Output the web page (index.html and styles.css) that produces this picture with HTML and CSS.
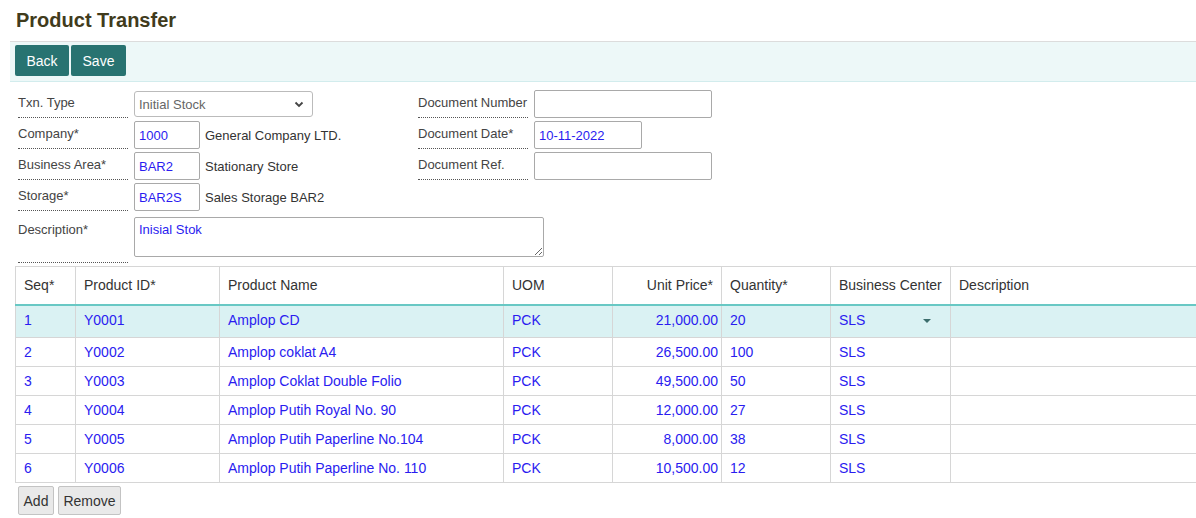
FILE: index.html
```html
<!DOCTYPE html>
<html>
<head>
<meta charset="utf-8">
<title>Product Transfer</title>
<link rel="stylesheet" href="styles.css">
</head>
<body>
<h1 class="title">Product Transfer</h1>
<div class="toolbar">
  <button class="btn-primary btn-back">Back</button>
  <button class="btn-primary btn-save">Save</button>
</div>
<div class="form">
  <div class="cols">
    <div class="col">
      <div class="row">
        <div class="label">Txn. Type</div>
        <div class="ctrl">
          <span class="select-wrap">
            <select class="select"><option>Initial Stock</option></select>
            <svg class="chev" width="10" height="7" viewBox="0 0 10 7"><path d="M1.5 1.5 L5 5 L8.5 1.5" fill="none" stroke="#444" stroke-width="1.8"/></svg>
          </span>
        </div>
      </div>
      <div class="row">
        <div class="label">Company*</div>
        <div class="ctrl"><input class="input w-short" value="1000"><span class="desc">General Company LTD.</span></div>
      </div>
      <div class="row">
        <div class="label">Business Area*</div>
        <div class="ctrl"><input class="input w-short" value="BAR2"><span class="desc">Stationary Store</span></div>
      </div>
      <div class="row">
        <div class="label">Storage*</div>
        <div class="ctrl"><input class="input w-short" value="BAR2S"><span class="desc">Sales Storage BAR2</span></div>
      </div>
    </div>
    <div class="col">
      <div class="row">
        <div class="label">Document Number</div>
        <div class="ctrl"><input class="input w-long" value=""></div>
      </div>
      <div class="row">
        <div class="label">Document Date*</div>
        <div class="ctrl"><input class="input w-date" value="10-11-2022"></div>
      </div>
      <div class="row">
        <div class="label">Document Ref.</div>
        <div class="ctrl"><input class="input w-long" value=""></div>
      </div>
    </div>
  </div>
  <div class="row row-desc">
    <div class="label label-desc">Description*</div>
    <div class="ctrl ctrl-top"><textarea class="textarea">Inisial Stok</textarea></div>
  </div>
</div>
<div class="grid-wrap">
  <table class="grid">
    <colgroup>
      <col class="c-seq"><col class="c-pid"><col class="c-name"><col class="c-uom"><col class="c-price"><col class="c-qty"><col class="c-bc"><col class="c-desc">
    </colgroup>
    <thead>
      <tr><th>Seq*</th><th>Product ID*</th><th>Product Name</th><th>UOM</th><th class="num">Unit Price*</th><th>Quantity*</th><th>Business Center</th><th>Description</th></tr>
    </thead>
    <tbody>
      <tr class="sel"><td>1</td><td>Y0001</td><td>Amplop CD</td><td>PCK</td><td class="num">21,000.00</td><td>20</td><td><span class="bc">SLS<span class="caret"></span></span></td><td></td></tr>
      <tr><td>2</td><td>Y0002</td><td>Amplop coklat A4</td><td>PCK</td><td class="num">26,500.00</td><td>100</td><td>SLS</td><td></td></tr>
      <tr><td>3</td><td>Y0003</td><td>Amplop Coklat Double Folio</td><td>PCK</td><td class="num">49,500.00</td><td>50</td><td>SLS</td><td></td></tr>
      <tr><td>4</td><td>Y0004</td><td>Amplop Putih Royal No. 90</td><td>PCK</td><td class="num">12,000.00</td><td>27</td><td>SLS</td><td></td></tr>
      <tr><td>5</td><td>Y0005</td><td>Amplop Putih Paperline No.104</td><td>PCK</td><td class="num">8,000.00</td><td>38</td><td>SLS</td><td></td></tr>
      <tr><td>6</td><td>Y0006</td><td>Amplop Putih Paperline No. 110</td><td>PCK</td><td class="num">10,500.00</td><td>12</td><td>SLS</td><td></td></tr>
    </tbody>
  </table>
</div>
<div class="grid-actions">
  <button class="btn btn-add">Add</button>
  <button class="btn btn-remove">Remove</button>
</div>
</body>
</html>
```
FILE: styles.css
```css
html, body {
  margin: 0;
  padding: 0;
  overflow: hidden;
  background: #fff;
}
body {
  font-family: "Liberation Sans", Arial, sans-serif;
  font-size: 14px;
  color: #333;
}
.title {
  margin: 0;
  padding: 9px 0 0 16px;
  font-size: 20px;
  line-height: 23px;
  font-weight: bold;
  color: #413b1c;
}
.toolbar {
  margin: 9px 0 0 10px;
  border-top: 1px solid #dcdcdc;
  border-bottom: 1px solid #d2eced;
  background: #edf8f8;
  padding: 3px 0 5px 5px;
  display: flex;
  gap: 2px;
}
.btn-primary {
  height: 31px;
  padding: 0;
  border: none;
  border-radius: 2px;
  background: #287371;
  color: #fff;
  font-family: inherit;
  font-size: 14px;
  text-align: center;
}
.btn-back { width: 54px; }
.btn-save { width: 55px; }
.form {
  padding: 8px 0 0 18px;
}
.cols {
  display: flex;
}
.col {
  display: flex;
  flex-direction: column;
  gap: 3px;
}
.col:first-child { width: 400px; }
.row {
  display: flex;
  height: 28px;
}
.label {
  width: 110px;
  box-sizing: border-box;
  padding-top: 5px;
  border-bottom: 1px dotted #555;
  font-size: 13px;
  line-height: 15px;
  color: #444;
}
.ctrl {
  display: flex;
  align-items: center;
  margin-left: 6px;
}
.ctrl-top { align-items: flex-start; }
.input {
  box-sizing: border-box;
  height: 28px;
  border: 1px solid #a9a9a9;
  border-radius: 2px;
  padding: 0 4px;
  font-family: inherit;
  font-size: 13px;
  color: #2a1cf0;
  outline: none;
}
.w-short { width: 66px; }
.w-long { width: 178px; }
.w-date { width: 108px; }
.desc {
  margin-left: 5px;
  font-size: 13px;
  color: #333;
}
.select-wrap {
  position: relative;
  display: inline-block;
  margin-top: 1px;
  align-self: flex-start;
}
.select {
  appearance: none;
  -webkit-appearance: none;
  box-sizing: border-box;
  width: 179px;
  height: 26px;
  border: 1px solid #bbb;
  border-radius: 3px;
  background: #fff;
  padding: 0 4px;
  font-family: inherit;
  font-size: 13px;
  color: #666;
  outline: none;
}
.chev {
  position: absolute;
  right: 9px;
  top: 10px;
}
.row-desc {
  height: 46px;
  margin-top: 6px;
}
.label-desc { height: 46px; }
.textarea {
  box-sizing: border-box;
  width: 410px;
  height: 40px;
  border: 1px solid #a9a9a9;
  border-radius: 2px;
  padding: 4px 4px;
  margin: 0;
  font-family: inherit;
  font-size: 13px;
  color: #2a1cf0;
  outline: none;
  resize: vertical;
}
.grid-wrap {
  margin: 3px 0 0 15px;
  overflow: hidden;
}
.grid {
  width: 1240px;
  table-layout: fixed;
  border-collapse: collapse;
}
.c-seq { width: 60px; }
.c-pid { width: 144px; }
.c-name { width: 284px; }
.c-uom { width: 109px; }
.c-price { width: 109px; }
.c-qty { width: 109px; }
.c-bc { width: 120px; }
.grid th {
  height: 36px;
  padding: 0 8px 1px 8px;
  border: 1px solid #d6d6d6;
  border-bottom: 2px solid #68c8c4;
  text-align: left;
  font-weight: normal;
  font-size: 14px;
  color: #333;
  white-space: nowrap;
}
.grid td {
  height: 28px;
  padding: 0 8px;
  border: 1px solid #d6d6d6;
  border-top: none;
  font-size: 14px;
  color: #2a1cf0;
  white-space: nowrap;
}
.grid tr.sel td {
  height: 28px;
  padding-bottom: 3px;
  background: #daf2f3;
}
.grid th.num { text-align: right; padding-right: 8px; }
.grid td.num { text-align: right; padding-right: 3px; }
.bc {
  display: flex;
  align-items: center;
}
.caret {
  margin-left: 58px;
  margin-top: 2px;
  width: 0;
  height: 0;
  border-left: 4px solid transparent;
  border-right: 4px solid transparent;
  border-top: 4px solid #3b6d6c;
}
.grid-actions {
  display: flex;
  gap: 4px;
  margin: 3px 0 0 18px;
}
.btn {
  height: 29px;
  padding: 0;
  border: 1px solid #c3c3c3;
  border-radius: 2px;
  background: #e9e9e9;
  color: #333;
  font-family: inherit;
  font-size: 14px;
  text-align: center;
}
.btn-add { width: 36px; }
.btn-remove { width: 63px; }
```
